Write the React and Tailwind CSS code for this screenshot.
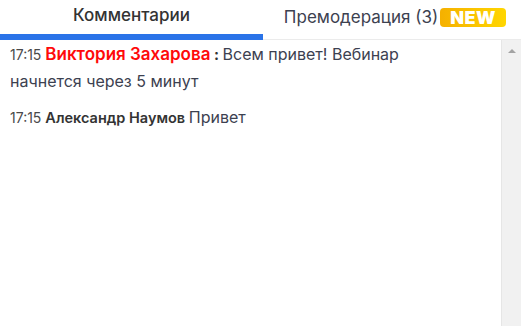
import React from "react";

const messages = [
  {
    id: 1,
    time: "17:15",
    name: "Виктория Захарова",
    highlight: true,
    text: "Всем привет! Вебинар начнется через 5 минут",
  },
  {
    id: 2,
    time: "17:15",
    name: "Александр Наумов",
    highlight: false,
    text: "Привет",
  },
];

const App = () => {
  return (
    <div
      className="w-[521px] h-[326px] bg-white flex flex-col overflow-hidden"
      style={{ fontFamily: "Inter, 'Noto Sans', sans-serif" }}
    >
      {/* Tabs */}
      <div className="flex h-[40px] border-b border-[#ebebeb] shrink-0">
        <div className="w-[263px] -mb-px border-b-[6px] border-[#2a73e8] flex items-center justify-center pb-[2px]">
          <span className="text-[17px] font-medium text-[#333]">Комментарии</span>
        </div>
        <div className="flex-1 flex items-center justify-center pb-[4px] pl-[6px]">
          <span className="text-[17px] text-[#3c4150]">Премодерация (3)</span>
          <span className="ml-[2px] w-[66px] h-[19px] rounded-[4px] bg-gradient-to-r from-[#f5b000] to-[#ffd600] text-white text-[18px] font-black leading-[19px] tracking-[0.5px] text-center">
            NEW
          </span>
        </div>
      </div>

      {/* Body */}
      <div className="flex flex-1 min-h-0">
        <div className="flex-1 pl-[10px] pr-[36px] pt-[1px]">
          {messages.map((m) => (
            <p
              key={m.id}
              className={`text-[16px] leading-[26px] text-[#3c4150] ${m.highlight ? "mb-[10px]" : ""}`}
            >
              <span className="text-[14px] text-[#4a4a4a]">{m.time} </span>
              {m.highlight ? (
                <>
                  <span className="text-[17px] font-semibold text-[#ff0a0a]">{m.name}</span>
                  <span className="text-[15px] font-bold text-[#333]"> : </span>
                </>
              ) : (
                <span className="text-[14.5px] font-semibold text-[#333]">{m.name} </span>
              )}
              {m.text}
            </p>
          ))}
        </div>

        {/* Scrollbar */}
        <div className="w-[20px] bg-[#f1f1f1] border-l border-[#e6e6e6] flex justify-center pt-[9px]">
          <div className="w-0 h-0 border-l-[4px] border-r-[4px] border-b-[4px] border-l-transparent border-r-transparent border-b-[#a3a3a3]" />
        </div>
      </div>
    </div>
  );
};

export default App;
